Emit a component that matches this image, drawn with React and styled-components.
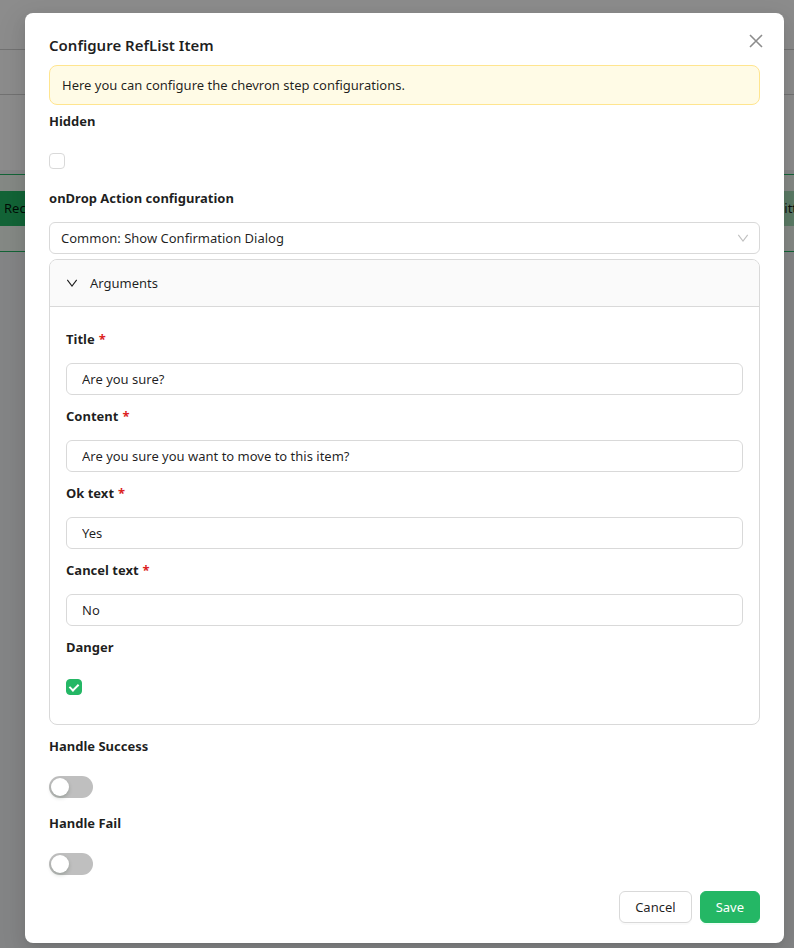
import React, { useState } from 'react';
import styled, { createGlobalStyle, css } from 'styled-components';

const GREEN = '#24b765';
const TEXT = 'rgba(0, 0, 0, 0.88)';
const BORDER = '#d9d9d9';

const GlobalStyle = createGlobalStyle`
  *, *::before, *::after { box-sizing: border-box; }
  body {
    margin: 0;
    background: #f1f2f4;
    color: ${TEXT};
    font-family: 'Segoe UI', 'Noto Sans', 'Open Sans', sans-serif;
    font-size: 13px;
    line-height: 22px;
  }
  button, input, select { font: inherit; color: inherit; }
`;

const Page = styled.div`
  min-height: 100vh;
  overflow: hidden;
`;

const PageBand = styled.div`
  height: ${({ $height }) => $height}px;
  background: #fff;
  border-bottom: ${({ $line }) => ($line ? '1px solid #cfcfcf' : '0')};
`;

const StepsBar = styled.div`
  display: flex;
  margin-top: 4px;
  padding: 16px 0 25px;
  background: #f3faf3;
  border: solid ${GREEN};
  border-width: 1px 0;
`;

const Step = styled.div`
  flex: ${({ $active }) => ($active ? '1 1 0' : '0 0 49px')};
  height: 35px;
  padding-left: 4px;
  overflow: hidden;
  white-space: nowrap;
  line-height: 35px;
  background: ${({ $active }) => ($active ? GREEN : '#a6dfb9')};
`;

const Overlay = styled.div`
  position: absolute;
  inset: 0;
  min-height: 100vh;
  padding: 13px 10px 5px 25px;
  background: rgba(0, 0, 0, 0.45);
`;

const Dialog = styled.section`
  padding: 20px 24px;
  background: #fff;
  border-radius: 8px;
  box-shadow: 0 6px 16px 0 rgba(0, 0, 0, 0.08), 0 3px 6px -4px rgba(0, 0, 0, 0.12),
    0 9px 28px 8px rgba(0, 0, 0, 0.05);
`;

const DialogHeader = styled.header`
  display: flex;
  align-items: center;
  justify-content: space-between;
  height: 24px;
  margin-bottom: 8px;
`;

const DialogTitle = styled.h1`
  margin: 0;
  font-size: 15px;
  font-weight: 600;
  line-height: 24px;
`;

const CloseButton = styled.button`
  display: grid;
  place-items: center;
  align-self: flex-start;
  width: 24px;
  height: 16px;
  margin-right: -8px;
  padding: 0;
  border: 0;
  background: none;
  color: rgba(0, 0, 0, 0.45);
  cursor: pointer;
`;

const Notice = styled.div`
  padding: 8px 12px;
  background: #fffbe6;
  border: 1px solid #ffe58f;
  border-radius: 8px;
`;

const Field = styled.div`
  display: flex;
  flex-direction: column;
  gap: 8px;
  margin-bottom: 5px;
`;

const Label = styled.label`
  align-self: flex-start;
  font-weight: 700;
  line-height: 32px;
`;

const Required = styled.span`
  margin-left: 4px;
  color: #dc1f1f;
`;

const Control = styled.div`
  display: flex;
  align-items: center;
  height: 32px;
`;

const SwitchControl = styled(Control)`
  align-items: flex-end;
  padding-bottom: 4px;
`;

const boxed = css`
  width: 100%;
  height: 32px;
  background: #fff;
  border: 1px solid ${BORDER};
  border-radius: 6px;
  outline: none;
  &:focus { border-color: ${GREEN}; }
`;

const TextInput = styled.input`
  ${boxed}
  padding: 4px 15px;
`;

const SelectWrap = styled.div`
  display: grid;
  align-items: center;
  > * { grid-area: 1 / 1; }
  > svg {
    justify-self: end;
    margin-right: 11px;
    color: rgba(0, 0, 0, 0.25);
    pointer-events: none;
  }
`;

const Select = styled.select`
  ${boxed}
  padding: 0 32px 0 11px;
  appearance: none;
`;

const Checkbox = styled.input`
  display: grid;
  place-items: center;
  width: 16px;
  height: 16px;
  margin: 0;
  appearance: none;
  background: #fff;
  border: 1px solid ${BORDER};
  border-radius: 4px;
  &:checked {
    background: ${GREEN};
    border-color: ${GREEN};
  }
  &:checked::after {
    content: '';
    width: 6px;
    height: 9px;
    border: solid #fff;
    border-width: 0 2px 2px 0;
    transform: translateY(-1px) rotate(45deg);
  }
`;

const Switch = styled.input`
  display: flex;
  align-items: center;
  width: 44px;
  height: 22px;
  margin: 0;
  padding: 2px;
  appearance: none;
  border-radius: 11px;
  background: #bfbfbf;
  cursor: pointer;
  &::before {
    content: '';
    width: 18px;
    height: 18px;
    border-radius: 50%;
    background: #fff;
    box-shadow: 0 2px 4px 0 rgba(0, 35, 11, 0.2);
  }
  &:checked {
    justify-content: flex-end;
    background: ${GREEN};
  }
`;

const Panel = styled.section`
  margin-bottom: 5px;
  border: 1px solid ${BORDER};
  border-radius: 8px;
  overflow: hidden;
`;

const PanelToggle = styled.button`
  display: flex;
  align-items: center;
  gap: 12px;
  width: 100%;
  height: 46px;
  padding: 0 16px;
  border: 0;
  background: #fafafa;
  text-align: left;
  cursor: pointer;
`;

const PanelBody = styled.div`
  padding: 16px;
  border-top: 1px solid ${BORDER};
`;

const Footer = styled.footer`
  display: flex;
  justify-content: flex-end;
  gap: 8px;
  margin-top: 12px;
`;

const Button = styled.button`
  height: 32px;
  padding: 0 15px;
  border: 1px solid ${({ $primary }) => ($primary ? GREEN : BORDER)};
  border-radius: 6px;
  background: ${({ $primary }) => ($primary ? GREEN : '#fff')};
  color: ${({ $primary }) => ($primary ? '#fff' : TEXT)};
  box-shadow: 0 2px 0 ${({ $primary }) => ($primary ? 'rgba(5, 255, 105, 0.06)' : 'rgba(0, 0, 0, 0.02)')};
  cursor: pointer;
`;

const Chevron = () => (
  <svg width="12" height="12" viewBox="0 0 12 12" fill="none" stroke="currentColor" strokeWidth="1.1" aria-hidden="true">
    <path d="M1.3 2.8 6 9l4.7-6.2" />
  </svg>
);

const CloseIcon = () => (
  <svg width="14" height="14" viewBox="0 0 14 14" fill="none" stroke="currentColor" strokeWidth="1.6" aria-hidden="true">
    <path d="M1 1l12 12M13 1 1 13" />
  </svg>
);

const ARGUMENTS = [
  { id: 'title', label: 'Title', value: 'Are you sure?' },
  { id: 'content', label: 'Content', value: 'Are you sure you want to move to this item?' },
  { id: 'okText', label: 'Ok text', value: 'Yes' },
  { id: 'cancelText', label: 'Cancel text', value: 'No' },
];

const HANDLERS = [
  { id: 'handleSuccess', label: 'Handle Success' },
  { id: 'handleFail', label: 'Handle Fail' },
];

export default function App() {
  const [open, setOpen] = useState(true);

  return (
    <>
      <GlobalStyle />
      <Page aria-hidden="true">
        <PageBand $height={50} $line />
        <PageBand $height={45} $line />
        <PageBand $height={75} />
        <StepsBar>
          <Step $active>Received</Step>
          <Step>Submitted</Step>
        </StepsBar>
      </Page>
      <Overlay>
        <Dialog role="dialog" aria-modal="true" aria-labelledby="dialog-title">
          <DialogHeader>
            <DialogTitle id="dialog-title">Configure RefList Item</DialogTitle>
            <CloseButton type="button" aria-label="Close">
              <CloseIcon />
            </CloseButton>
          </DialogHeader>
          <Notice>Here you can configure the chevron step configurations.</Notice>
          <Field>
            <Label htmlFor="hidden">Hidden</Label>
            <Control>
              <Checkbox id="hidden" type="checkbox" />
            </Control>
          </Field>
          <Field>
            <Label htmlFor="action">onDrop Action configuration</Label>
            <SelectWrap>
              <Select id="action" defaultValue="confirm">
                <option value="confirm">Common: Show Confirmation Dialog</option>
              </Select>
              <Chevron />
            </SelectWrap>
          </Field>
          <Panel>
            <PanelToggle type="button" aria-expanded={open} onClick={() => setOpen(!open)}>
              <Chevron />
              Arguments
            </PanelToggle>
            {open && (
              <PanelBody>
                {ARGUMENTS.map(({ id, label, value }) => (
                  <Field key={id}>
                    <Label htmlFor={id}>
                      {label}
                      <Required>*</Required>
                    </Label>
                    <TextInput id={id} type="text" required defaultValue={value} />
                  </Field>
                ))}
                <Field>
                  <Label htmlFor="danger">Danger</Label>
                  <Control>
                    <Checkbox id="danger" type="checkbox" defaultChecked />
                  </Control>
                </Field>
              </PanelBody>
            )}
          </Panel>
          {HANDLERS.map(({ id, label }) => (
            <Field key={id}>
              <Label htmlFor={id}>{label}</Label>
              <SwitchControl>
                <Switch id={id} type="checkbox" role="switch" />
              </SwitchControl>
            </Field>
          ))}
          <Footer>
            <Button type="button">Cancel</Button>
            <Button type="button" $primary>
              Save
            </Button>
          </Footer>
        </Dialog>
      </Overlay>
    </>
  );
}
